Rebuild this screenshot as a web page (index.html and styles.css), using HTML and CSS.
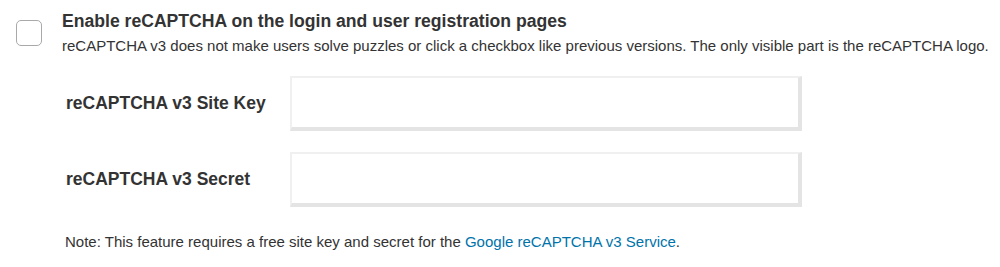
FILE: index.html
```html
<!DOCTYPE html>
<html lang="en">
<head>
  <meta charset="UTF-8">
  <title>reCAPTCHA Settings</title>
  <link rel="stylesheet" href="styles.css">
</head>
<body>
  <div class="settings">
    <div class="option">
      <label class="check"><input type="checkbox" id="enableRecaptcha"><span class="box"></span></label>
      <div class="option-text">
        <h3>Enable reCAPTCHA on the login and user registration pages</h3>
        <p>reCAPTCHA v3 does not make users solve puzzles or click a checkbox like previous versions. The only visible part is the reCAPTCHA logo.</p>
      </div>
    </div>

    <div class="fields">
      <div class="field">
        <label for="siteKey">reCAPTCHA v3 Site Key</label>
        <input type="text" id="siteKey">
      </div>
      <div class="field">
        <label for="secretKey">reCAPTCHA v3 Secret</label>
        <input type="text" id="secretKey">
      </div>
    </div>

    <p class="note">Note: This feature requires a free site key and secret for the <a href="#">Google reCAPTCHA v3 Service</a>.</p>
  </div>
</body>
</html>
```

FILE: styles.css
```css
body {
  font-family: "Liberation Sans", Arial, sans-serif;
  background-color: #fff;
  color: #333;
  margin: 0;
  padding: 0;
}
.settings {
  padding: 11px 0 0 16px;
}
.option {
  display: flex;
  align-items: flex-start;
}
.check {
  position: relative;
  margin-top: 9px;
  margin-right: 20px;
}
.check input {
  position: absolute;
  opacity: 0;
  margin: 0;
}
.check .box {
  display: block;
  width: 24px;
  height: 24px;
  border: 1px solid #a9a9a9;
  border-radius: 5px;
  background-color: #fff;
}
.option-text h3 {
  margin: 0;
  font-size: 17.6px;
  line-height: 21px;
  font-weight: bold;
  color: #333;
}
.option-text p {
  margin: 5px 0 0;
  font-size: 15px;
  line-height: 18px;
  color: #333;
}
.fields {
  margin-top: 21px;
  padding-left: 50px;
}
.field {
  display: flex;
  align-items: center;
  margin-bottom: 21px;
}
.field label {
  width: 224px;
  font-size: 17.5px;
  font-weight: bold;
  color: #333;
}
.field input {
  box-sizing: border-box;
  width: 512px;
  height: 55px;
  margin: 0;
  border: 2px solid #f0f0f0;
  border-right: 4px solid #e4e4e4;
  border-bottom: 4px solid #e4e4e4;
  background-color: #fff;
  outline: none;
}
.note {
  margin: 26px 0 0 49px;
  font-size: 15px;
  color: #333;
}
.note a {
  color: #0073aa;
  text-decoration: none;
}
```
